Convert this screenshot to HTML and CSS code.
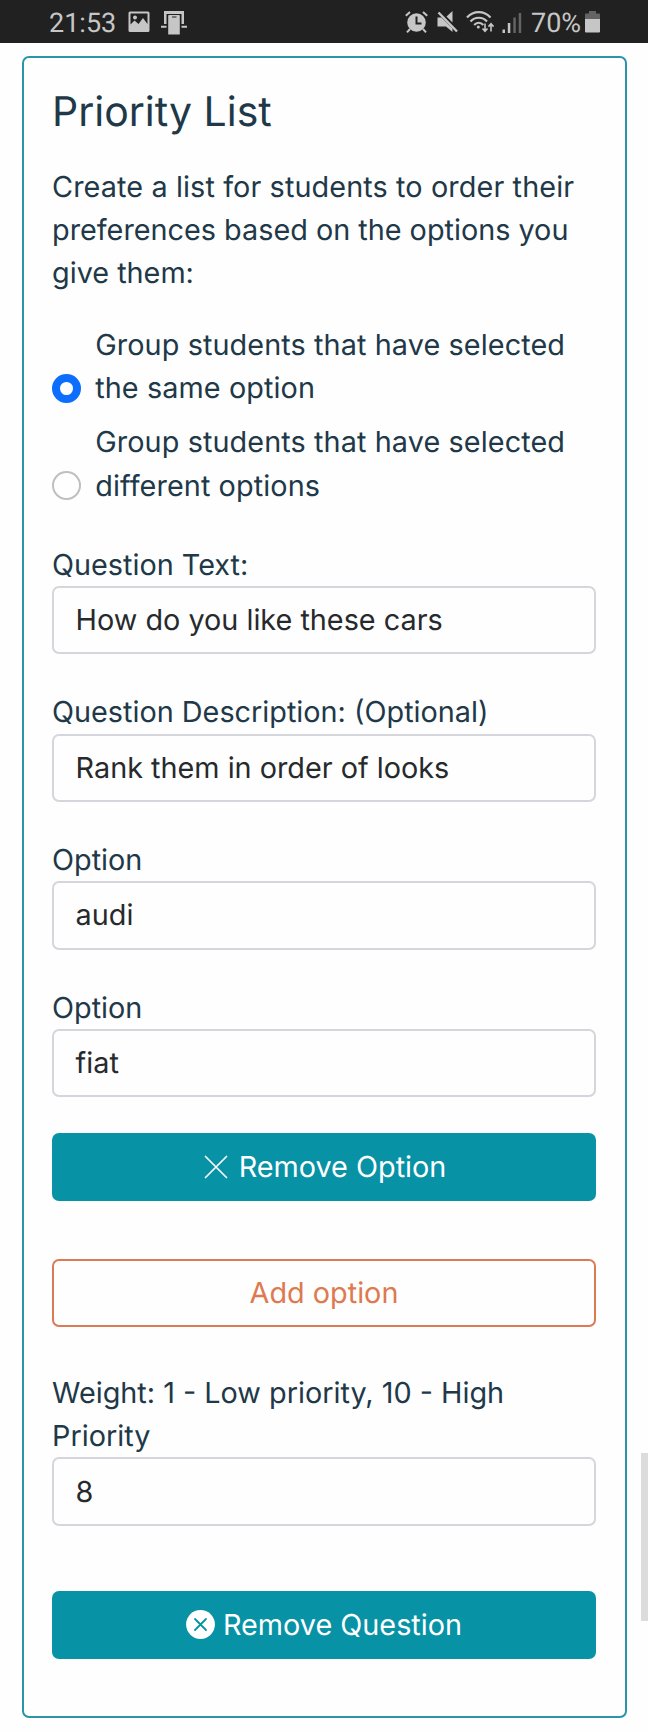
FILE: index.html
```html
<!DOCTYPE html>
<html lang="en">
<head>
<meta charset="utf-8">
<title>Priority List</title>
<link rel="stylesheet" href="styles.css">
</head>
<body>
<header class="status">
  <span class="clock">21:53</span>
  <svg class="i-photo" width="22" height="22" viewBox="0 0 22 22"><path fill="currentColor" fill-rule="evenodd" d="M2 .5h18a1.500 1.500 0 0 1 1.500 1.500v17.500a1.500 1.500 0 0 1-1.500 1.500H2a1.500 1.500 0 0 1-1.500-1.500V2A1.500 1.500 0 0 1 2 .5zM2.500 2.500v11l4-4 4 3.500 4.500-6 4.500 6V2.500zM5 6.500a2 2 0 1 0 4 0 2 2 0 0 0-4 0z"/></svg>
  <svg class="i-phone" width="26" height="24" viewBox="0 0 26 24"><path fill="currentColor" d="M3 0h20v13h-2.500V3h-15v10H3zM0 14.700h5.500v2H0zM20.500 14.700H26v2h-5.500zM8 4h10a.8.8 0 0 1 .8.8V23.500H7.200V4.800A.8.8 0 0 1 8 4z"/><path stroke="#212121" stroke-width="1" d="M11 6h4.500"/></svg>
  <div class="right">
    <svg class="i-alarm" width="23" height="22" viewBox="0 0 23 22"><circle cx="11.500" cy="11.500" r="9.300" fill="currentColor"/><path fill="none" stroke="currentColor" stroke-width="2" d="M.8 4.700 5 1M22.200 4.700 18 1M5 18l-3 3.300M18 18l3 3.300"/><path fill="none" stroke="#212121" stroke-width="2" d="M11.500 5.500v7h5"/></svg>
    <svg class="i-mute" width="21" height="22" viewBox="0 0 21 22"><path fill="currentColor" d="M.5 6.500h4l11 11V21L9 15.500H.5zM15.500 0v11.500L9.500 5.500z"/><path stroke="currentColor" stroke-width="2.400" d="M1.500 1.500 20 20.500"/></svg>
    <svg class="i-wifi" width="29" height="22" viewBox="0 0 29 22"><g fill="none" stroke="currentColor" stroke-width="2.200"><path d="M1 6.500C7.500-.6 18-.6 24.500 6.500M4.500 10.500c4.500-5 12-5 16.500 0M8.200 14c2.600-3 6.500-3 9.100 0"/><path stroke-width="1.600" d="M19 12.500v7.500M16.500 17.500l2.500 2.700 2.500-2.700M25 20.500V13M22.500 15.600 25 12.800l2.500 2.800"/></g><circle cx="12.300" cy="16" r="1.500" fill="currentColor"/></svg>
    <svg class="i-signal" width="20" height="21" viewBox="0 0 20 21"><path fill="currentColor" d="M.5 17.500H3V21H.5zM5.800 11h2.500v10H5.800z"/><path fill="#646464" d="M11.300 5.500h2.500V21h-2.500zM16.700 1h2.500v20h-2.500z"/></svg>
    <span class="percent">70%</span>
    <svg class="i-battery" width="15" height="22" viewBox="0 0 15 22"><path fill="#646464" d="M4 0h7v2.500h3A1 1 0 0 1 15 3.500V8H0V3.500a1 1 0 0 1 1-1h3z"/><path fill="currentColor" d="M0 8h15v12.500a1 1 0 0 1-1 1H1a1 1 0 0 1-1-1z"/></svg>
  </div>
</header>
<main class="card">
  <h1 class="title">Priority List</h1>
  <p class="intro"><span class="lead">Create a list for students to order their</span><br>preferences based on the options you<br>give them:</p>
  <div class="choices">
    <label class="choice"><span class="radio checked"></span><span>Group students that have selected<br>the same option</span></label>
    <label class="choice"><span class="radio"></span><span>Group students that have selected<br>different options</span></label>
  </div>
  <div class="field"><div class="label">Question Text:</div><div class="input">How do you like these cars</div></div>
  <div class="field"><div class="label">Question Description: (Optional)</div><div class="input">Rank them in order of looks</div></div>
  <div class="field"><div class="label">Option</div><div class="input">audi</div></div>
  <div class="field"><div class="label">Option</div><div class="input">fiat</div></div>
  <div class="btn remove-option"><svg width="24" height="24" viewBox="0 0 24 24"><path stroke="currentColor" stroke-width="1.700" stroke-linecap="round" d="m1.500 1.500 21 21M22.500 1.500l-21 21"/></svg><span>Remove Option</span></div>
  <div class="btn outline">Add option</div>
  <div class="field"><div class="label">Weight: 1 - Low priority, 10 - High<br>Priority</div><div class="input">8</div></div>
  <div class="btn remove-question"><svg width="29" height="29" viewBox="0 0 29 29"><circle cx="14.500" cy="14.500" r="14.400" fill="currentColor"/><path stroke="#0892a6" stroke-width="1.800" stroke-linecap="round" d="m9 9 11 11M20 9 9 20"/></svg><span>Remove Question</span></div>
</main>
<div class="scrollbar"></div>
</body>
</html>
```
FILE: styles.css
```css
* { box-sizing: border-box; }
body {
  margin: 0;
  height: 1732px;
  overflow: hidden;
  background: #fefefe;
  color: #213848;
  font: 400 28.8px/43.2px Inter, "Liberation Sans", sans-serif;
  text-rendering: geometricPrecision;
}
svg { display: block; flex: none; }
.status {
  height: 43px;
  padding: 0 48px 0 49px;
  display: flex;
  align-items: center;
  background: #212121;
  color: #c6c6c6;
  font: 400 27px/43px Roboto, sans-serif;
}
.clock { width: 79px; padding-top: 3px; }
.i-phone { margin: 3px 0 0 11px; }
.right { display: flex; align-items: center; margin-left: auto; }
.i-mute { margin-left: 9px; }
.i-wifi { margin-left: 8px; }
.i-signal { margin: 1px 9px 0 7px; }
.percent { padding-top: 3px; width: 54px; }
.card {
  margin: 13px 21px 0 22px;
  height: 1662px;
  padding: 25.500px 29px 0 28px;
  border: 2px solid #2a95a8;
  border-radius: 7px;
}
.title { margin: 0; font-size: 41px; line-height: 54px; font-weight: 400; }
.intro { margin: 27px 0 29px; white-space: nowrap; }
.lead { letter-spacing: .11px; }
.choices { display: flex; flex-direction: column; gap: 10.800px; margin-bottom: 36px; white-space: nowrap; letter-spacing: .1px; }
.choice { display: flex; align-items: flex-end; gap: 14.400px; }
.radio {
  width: 28.800px;
  height: 28.800px;
  margin-bottom: 7px;
  border: 2px solid #bfbfbf;
  border-radius: 50%;
  flex: none;
}
.radio.checked { border: 8px solid #0d6efd; }
.field { margin-bottom: 36px; white-space: nowrap; }
.input {
  height: 68.400px;
  padding: 10.300px 21.600px;
  border: 2px solid #d5d6db;
  border-radius: 7px;
  color: #272a2d;
}
.btn {
  height: 68px;
  border-radius: 7px;
  display: flex;
  align-items: center;
  justify-content: center;
  background: #0892a6;
  color: #fff;
}
.remove-option { gap: 11px; padding-left: 2px; }
.outline {
  margin: 58px 0 43.800px;
  border: 2px solid #dd7a56;
  background: none;
  color: #dd7a50;
}
.remove-question { margin-top: 65px; gap: 8px; }
.scrollbar { position: absolute; right: 0; top: 1453px; width: 7px; height: 168px; background: #dcdcdc; }
```
